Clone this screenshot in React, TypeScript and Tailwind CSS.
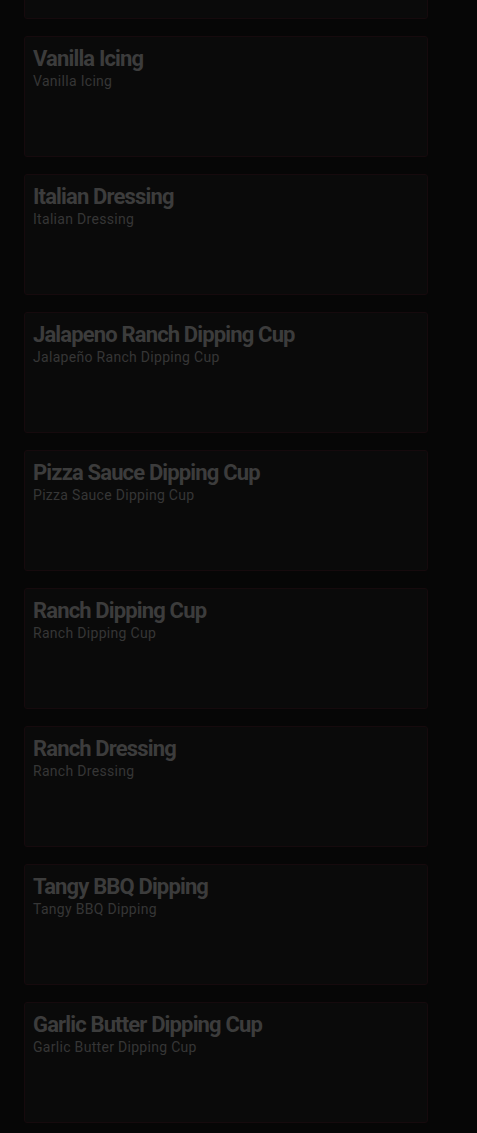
import React from "react";

const items = [
  { title: "Vanilla Icing", sub: "Vanilla Icing" },
  { title: "Italian Dressing", sub: "Italian Dressing" },
  { title: "Jalapeno Ranch Dipping Cup", sub: "Jalapeño Ranch Dipping Cup" },
  { title: "Pizza Sauce Dipping Cup", sub: "Pizza Sauce Dipping Cup" },
  { title: "Ranch Dipping Cup", sub: "Ranch Dipping Cup" },
  { title: "Ranch Dressing", sub: "Ranch Dressing" },
  { title: "Tangy BBQ Dipping", sub: "Tangy BBQ Dipping" },
  { title: "Garlic Butter Dipping Cup", sub: "Garlic Butter Dipping Cup" },
];

export default function App() {
  return (
    <div className="h-[1133px] overflow-hidden bg-[#060606] font-['Roboto',sans-serif]">
      <div className="-mt-[102px] flex flex-col gap-[17px] pl-6 pr-[49px]">
        {/* previous card, scrolled mostly out of view */}
        <div className="h-[121px] rounded-[3px] border border-[#160a0d] bg-[#0a0a0a]" />
        {items.map((item) => (
          <div
            key={item.title}
            className="h-[121px] rounded-[3px] border border-[#160a0d] bg-[#0a0a0a] px-2 pt-[8px]"
          >
            <h3 className="text-[22px] font-bold leading-[27px] tracking-[-0.85px] text-[#3c3c3c]">
              {item.title}
            </h3>
            <p className="text-[14px] leading-[18px] tracking-[0.3px] text-[#363636]">
              {item.sub}
            </p>
          </div>
        ))}
      </div>
    </div>
  );
}
